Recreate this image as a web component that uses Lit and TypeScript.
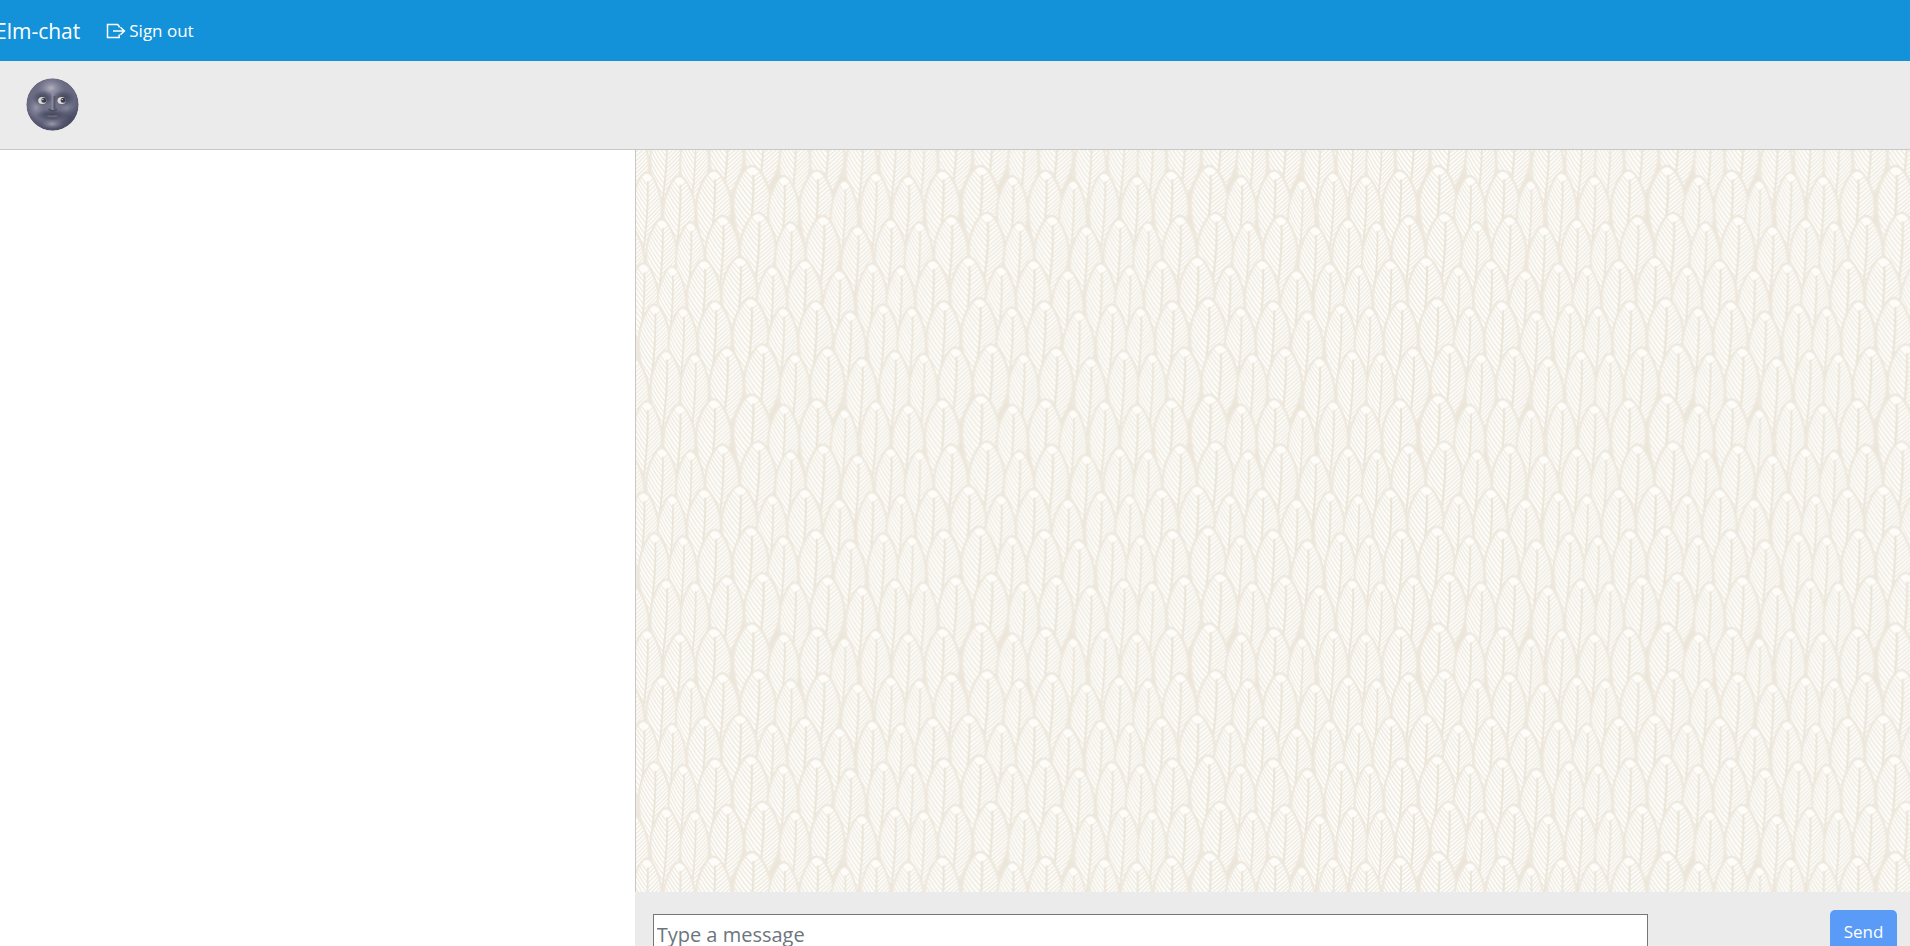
import { LitElement, html, css, svg } from "lit";
import { customElement } from "lit/decorators.js";

type Feather = { x: number; y: number; w: number };

// One tile of the wallpaper repeats every TILE units in both directions.
const TILE = 228.7;

// Tip x, tip y, half width; five overlapping rows of seven feathers.
const FIRST_ROW: number[][] = [
  [10.7, 22, 15], [43.3, 25.5, 16], [77.7, 20, 17.5], [116, 15.5, 18.7],
  [147.7, 25.5, 15.5], [180.7, 20, 17.2], [208.3, 30, 13.6],
];
const ROW: number[][] = [
  [0, 0, 15.5], [28.6, 3, 14.3], [60.6, -3.3, 17], [96.3, -6.5, 18],
  [128.7, 3, 15.3], [161.3, -3.3, 17.2], [195.6, 7, 16],
];
const ROW_STARTS: number[][] = [[25.7, 68.7], [7.3, 113], [18.3, 154], [30, 200.3]];

const rows: Feather[][] = [
  FIRST_ROW.map(([x, y, w]) => ({ x, y, w })),
  ...ROW_STARTS.map(([sx, sy]) => ROW.map(([x, y, w]) => ({ x: sx + x, y: sy + y, w }))),
];

const stemAt = (y: number) => 1 - Math.max(0, y - 34) * 0.08;

const barbs = (() => {
  let d = "";
  for (let y = 14; y < 112; y += 5.4) {
    const s = stemAt(y);
    d += `M${s} ${y}Q${s - 8} ${y - 9} ${s - 15} ${y - 23}`;
  }
  for (let y = 12; y < 108; y += 4.4) {
    const s = stemAt(y);
    d += `M${s} ${y}Q${s + 8} ${y - 7} ${s + 17} ${y - 17}`;
  }
  return d;
})();

const OUTLINE = "M0 0C7 0 16.5 20 16.5 38C16.5 56 6 72 -6 96C-13 72 -16.5 54 -16.5 38C-16.5 20 -7 0 0 0Z";

@customElement("feather-wallpaper")
export class FeatherWallpaper extends LitElement {
  static styles = css`
    :host { display: block; overflow: hidden; }
    svg { display: block; width: 100%; height: 100%; }
  `;

  private feather(f: Feather, dx: number, dy: number) {
    return svg`<use href="#feather" transform="translate(${f.x + dx} ${f.y + dy}) scale(${f.w / 16} 1)"/>`;
  }

  render() {
    const all = [
      ...rows.slice(3).map((r) => ({ r, dy: -TILE })),
      ...rows.map((r) => ({ r, dy: 0 })),
      { r: rows[0], dy: TILE },
    ];
    return html`<svg aria-hidden="true">
      <defs>
        <clipPath id="shape"><path d=${OUTLINE} /></clipPath>
        <g id="feather">
          <path d=${OUTLINE} fill="#fefdf9" />
          <g clip-path="url(#shape)">
            <path d=${barbs} fill="none" stroke="#eeeae2" stroke-width="1.3" />
            <path d="M1 8C2 34 0 58 -6 96" fill="none" stroke="#ebe5d9" stroke-width="1.9" />
            <ellipse cx="0.5" cy="5.5" rx="3.2" ry="4" fill="#fdfcf8" />
            <path d=${OUTLINE} fill="none" stroke="#f1ece3" stroke-width="3.4" />
          </g>
          <path d=${OUTLINE} fill="none" stroke="#ede7dc" stroke-width="1.3" />
        </g>
        <pattern id="feathers" width=${TILE} height=${TILE} patternUnits="userSpaceOnUse">
          <rect width=${TILE} height=${TILE} fill="#ece6da" />
          ${all.map(({ r, dy }) => [-TILE, 0, TILE].map((dx) => r.map((f) => this.feather(f, dx, dy))))}
        </pattern>
      </defs>
      <rect width="100%" height="100%" fill="url(#feathers)" />
    </svg>`;
  }
}

@customElement("app-root")
export class AppRoot extends LitElement {
  static styles = css`
    :host {
      display: flex;
      flex-direction: column;
      height: 100vh;
      overflow: hidden;
      background: #fff;
      font-family: "Open Sans", "Noto Sans", sans-serif;
    }
    * { box-sizing: border-box; }
    .nav {
      display: flex;
      align-items: center;
      gap: 26px;
      flex: none;
      height: 61px;
      margin-left: -5px;
      background: #1392da;
    }
    .nav a { color: #fff; text-decoration: none; white-space: nowrap; }
    .brand { font-size: 21px; }
    .signout { display: flex; align-items: center; gap: 3px; font-size: 17px; }
    .signout svg { width: 20px; height: 16px; }
    .profile {
      flex: none;
      padding: 17px 26px;
      height: 89px;
      background: #ebebeb;
      border-bottom: 1px solid #c8c8c8;
    }
    .avatar { display: block; width: 53px; height: 53px; }
    .body { display: flex; flex: 1; min-height: 0; }
    .contacts { flex: none; width: calc(100% / 3 - 2px); background: #fff; }
    .chat { display: flex; flex: 1; min-width: 0; flex-direction: column; }
    .messages { flex: 1; min-height: 0; border-left: 1px solid #c8c8c8; }
    .composer {
      display: flex;
      align-items: flex-start;
      justify-content: space-between;
      flex: none;
      height: 54px;
      padding: 18px 13px 0 18px;
      background: #ebebeb;
    }
    .composer input {
      width: 80%;
      height: 40px;
      margin-top: 4px;
      padding: 1px 3px;
      border: 1px solid #767676;
      border-radius: 0;
      background: #fff;
      color: #212529;
      font: inherit;
      font-size: 20px;
      outline: 0;
    }
    .composer input::placeholder { color: #6c757d; opacity: 1; }
    .composer button {
      width: 67px;
      height: 42px;
      padding: 0;
      border: 0;
      border-radius: 5px;
      background: #5a9bf8;
      color: #fff;
      font: inherit;
      font-size: 17px;
    }
  `;

  render() {
    return html`
      <nav class="nav">
        <a class="brand" href="#">Elm-chat</a>
        <a class="signout" href="#">
          <svg viewBox="0 0 20 16" fill="none" stroke="#fff" stroke-width="1.5" aria-hidden="true">
            <path d="M13.2 4.4V3.2L11.6 1.6H1.5V14.6H13.2V11.4" />
            <path d="M7 8H18M14.4 4.2L18.4 8L14.4 11.8" />
          </svg>
          <span>Sign out</span>
        </a>
      </nav>
      <header class="profile">${this.moon()}</header>
      <main class="body">
        <aside class="contacts"></aside>
        <section class="chat">
          <feather-wallpaper class="messages"></feather-wallpaper>
          <form class="composer" @submit=${(e: Event) => e.preventDefault()}>
            <input type="text" placeholder="Type a message" aria-label="Type a message" />
            <button type="submit">Send</button>
          </form>
        </section>
      </main>
    `;
  }

  private moon() {
    return html`<svg class="avatar" viewBox="0 0 53 53" role="img" aria-label="Profile picture">
      <defs>
        <clipPath id="round"><circle cx="26.5" cy="26.5" r="26.2" /></clipPath>
        <radialGradient id="disc" cx="0.47" cy="0.38" r="0.62">
          <stop offset="0" stop-color="#77788e" />
          <stop offset="0.75" stop-color="#66687f" />
          <stop offset="1" stop-color="#484b62" />
        </radialGradient>
        <radialGradient id="glow">
          <stop offset="0" stop-color="#b4b2bf" />
          <stop offset="1" stop-color="#8585a0" stop-opacity="0" />
        </radialGradient>
        <radialGradient id="shade">
          <stop offset="0" stop-color="#42465a" />
          <stop offset="0.5" stop-color="#474b60" stop-opacity="0.7" />
          <stop offset="1" stop-color="#4c5065" stop-opacity="0" />
        </radialGradient>
      </defs>
      <g clip-path="url(#round)">
        <circle cx="26.5" cy="26.5" r="26.2" fill="url(#disc)" />
        <ellipse cx="25" cy="10" rx="14" ry="11" fill="url(#glow)" />
        <ellipse cx="10" cy="30" rx="9" ry="11" fill="url(#glow)" opacity="0.6" />
        <ellipse cx="41" cy="31" rx="8" ry="7" fill="url(#glow)" opacity="0.45" />
        <ellipse cx="17" cy="20" rx="11" ry="8" fill="url(#shade)" />
        <ellipse cx="38" cy="20" rx="11" ry="8" fill="url(#shade)" />
        <ellipse cx="44" cy="40" rx="12" ry="11" fill="url(#shade)" opacity="0.7" />
        <ellipse cx="26" cy="37" rx="16" ry="6" fill="url(#shade)" />
        <path d="M26.5 15V32" stroke="#9c9baa" stroke-width="2" opacity="0.5" />
        <path d="M28.5 18V31" stroke="#44485d" stroke-width="2" opacity="0.6" />
        <path d="M22.5 31Q26.5 35 31 31" fill="none" stroke="#484c61" stroke-width="1.2" />
        <ellipse cx="26" cy="46" rx="11" ry="5" fill="url(#glow)" opacity="0.7" />
        <path d="M20 38.5Q23 36.5 26 37.5Q29 36.5 33 38.5Q27 40 20 38.5Z" fill="#6b6a7b" />
        <path d="M20 38.5Q27 40.5 33 38.5Q27 44 20 38.5Z" fill="#55566b" />
        <ellipse cx="16.3" cy="22.5" rx="4.1" ry="3.5" fill="#dddbd4" />
        <ellipse cx="35.6" cy="22.5" rx="4.1" ry="3.5" fill="#dddbd4" />
        <circle cx="17.9" cy="22.2" r="2.5" fill="#3a3b4c" />
        <circle cx="37.2" cy="22.2" r="2.5" fill="#3a3b4c" />
        <circle cx="16.9" cy="21.6" r="0.7" fill="#eeece5" />
        <circle cx="36.2" cy="21.6" r="0.7" fill="#eeece5" />
      </g>
    </svg>`;
  }
}
